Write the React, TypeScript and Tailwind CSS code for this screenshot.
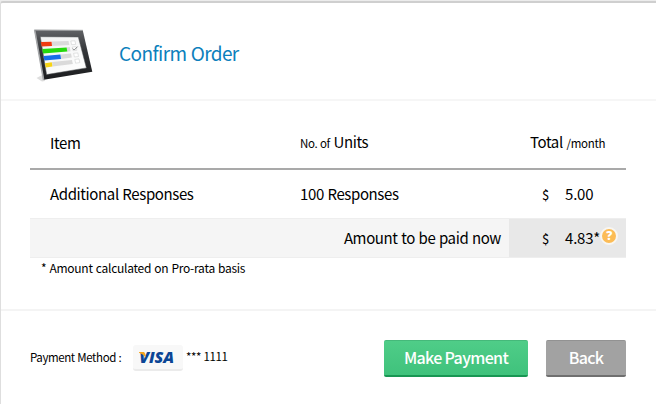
import type { ReactNode } from 'react';

const FrameIcon = () => (
  <svg width="62" height="56" viewBox="0 0 62 56" fill="none">
    <defs>
      <linearGradient id="frame" x1="0" y1="0" x2="0" y2="1">
        <stop offset="0" stopColor="#606265" />
        <stop offset="0.4" stopColor="#35373a" />
        <stop offset="1" stopColor="#1b1c1e" />
      </linearGradient>
      <linearGradient id="screen" x1="0" y1="0" x2="1" y2="1">
        <stop offset="0" stopColor="#f1f2f2" />
        <stop offset="1" stopColor="#ffffff" />
      </linearGradient>
    </defs>
    <path d="M3.5 50 L9 53.5 L12 53 L11 46 Z" fill="#dedede" />
    <path d="M1.4 2.2 L49.8 2.6 L59.3 43.7 L10.8 51.8 Z" fill="url(#frame)" />
    <path d="M0.9 2.1 L9.8 52.2 L11.4 51.8 L2.6 2.8 Z" fill="#a5a7a9" />
    <path d="M1.2 1.9 L49.9 2.3" stroke="#8d8f91" strokeWidth="0.7" />
    <path d="M7.3 8.7 L45.3 9 L53.4 39.9 L13.6 46.6 Z" fill="url(#screen)" stroke="#55585b" strokeWidth="0.5" />
    <path d="M19 13.4 L35.5 13 L36.3 17.1 L19 18 Z" fill="#dadada" />
    <path d="M7.9 14.1 L18.6 13.8 L19 18 L8.6 18.5 Z" fill="#f03a10" />
    <path d="M33.5 19.4 L36.8 19 L37.5 23.2 L34.2 23.8 Z" fill="#dadada" />
    <path d="M9.2 21 L33.6 19.5 L34.3 23.6 L10 25.4 Z" fill="#25d80c" />
    <path d="M27.5 26.4 L38 25.4 L38.8 29.4 L28 30.9 Z" fill="#dadada" />
    <path d="M10.5 28 L27.4 26.4 L28 30.9 L11.4 32.6 Z" fill="#176de8" />
    <path d="M19 34 L39 31.9 L39.8 36 L19.5 38.6 Z" fill="#dadada" />
    <path d="M12 35.2 L18.8 34.3 L19.4 38.6 L12.8 39.6 Z" fill="#f7d313" />
    <path d="M37.8 13 L42 12.8 L42.7 16.4 L38.6 16.7 Z M39.2 19 L43.2 18.7 L43.9 22.3 L40 22.7 Z M40.6 25.3 L44.8 24.9 L45.5 28.5 L41.4 29 Z M41.8 31.4 L46 30.9 L46.8 34.6 L42.6 35.2 Z" fill="#fff" stroke="#cfd0d0" strokeWidth="0.6" />
    <path d="M39.8 20.6 L41.2 22 L44.6 18.6" stroke="#77797b" strokeWidth="0.9" />
  </svg>
);

const VisaCard = () => (
  <div className="relative flex h-[26px] w-[50px] items-center justify-center rounded-[3px] border-b-2 border-[#ebebeb] bg-[#f8f8f8]">
    <span className="pt-px pr-[3px] font-['Open_Sans',sans-serif] text-[16px] leading-none font-extrabold tracking-[-0.1px] text-[#0b4595] italic">
      VISA
    </span>
    <svg className="absolute top-[7px] left-[6px]" width="9" height="8" viewBox="0 0 9 8">
      <path d="M0 0 H4.5 Q5.8 0.2 6.1 1.8 L6.9 5.8 Q4.6 2.2 0 0.8 Z" fill="#f6a51c" />
    </svg>
  </div>
);

const HelpBadge = () => (
  <span className="flex size-[18px] items-center justify-center rounded-full border-2 border-[#f8f6f2] bg-[#fcbc56] font-['Open_Sans',sans-serif] text-[12px] leading-none font-extrabold text-white">
    ?
  </span>
);

interface PriceProps {
  amount: string;
  children?: ReactNode;
}

const Price = ({ amount, children }: PriceProps) => (
  <div className="flex items-center">
    <span className="w-[23px] pt-px pl-px text-[13px]">$</span>
    <span className="pl-px tracking-[-0.2px]">{amount}</span>
    {children}
  </div>
);

export default function App() {
  return (
    <div className="flex h-[404px] w-[656px] flex-col bg-[#ececec] pt-px font-['Noto_Sans_CJK_SC',sans-serif] text-black">
      <div className="flex flex-1 flex-col rounded-tl-[3px] border-t-2 border-l border-t-[#cfcfcf] border-l-[#dedede] bg-white">
        <header className="flex h-[98px] items-center border-b-2 border-[#f6f6f6] pt-1 pl-[32px]">
          <div className="pt-1.5">
            <FrameIcon />
          </div>
          <h1 className="ml-6 text-[19px] leading-6 tracking-[-0.6px] text-[#0c80bc] [word-spacing:0.6px]">
            Confirm Order
          </h1>
        </header>

        <main className="h-[210px] border-b-2 border-[#f4f4f4] pr-[30px] pl-[29px] text-[15px] leading-5 tracking-[-0.38px] [word-spacing:0.6px]">
          <div className="flex h-[69px] items-center border-b-2 border-[#a9a9a9] pt-[15px] pl-5">
            <div className="w-[250px] pt-0.5">Item</div>
            <div className="w-[230px]">
              <span className="text-[11.5px]">No. of</span> Units
            </div>
            <div>
              Total <span className="text-[11.5px] tracking-[-0.25px]">/month</span>
            </div>
          </div>
          <div className="flex h-12 items-center pl-5">
            <div className="w-[250px]">Additional Responses</div>
            <div className="w-[241px]">100 Responses</div>
            <Price amount="5.00" />
          </div>
          <div className="flex h-10 items-stretch border-y border-[#eeeeee] bg-[#f5f5f5]">
            <div className="flex w-[479px] items-center justify-end pr-2">Amount to be paid now</div>
            <div className="flex flex-1 items-center bg-[#e8e8e8] pl-8">
              <Price amount="4.83*">
                <span className="pb-1">
                  <HelpBadge />
                </span>
              </Price>
            </div>
          </div>
          <p className="pl-[11px] text-[12px] tracking-[-0.25px]">* Amount calculated on Pro-rata basis</p>
        </main>

        <footer className="flex h-[93px] items-center pt-px pr-[30px] pl-[29px] text-[11.5px] tracking-[-0.4px] [word-spacing:0.4px]">
          <span className="w-[103px] pb-px">Payment Method :</span>
          <div className="pb-px">
            <VisaCard />
          </div>
          <span className="ml-[3px] pb-[3px]">*** 1111</span>
          <button className="ml-auto h-[37px] w-[144px] rounded-[2px] border-t border-b-2 border-t-[#45b97a] border-b-[#189653] bg-linear-to-b from-[#4fcd88] to-[#3fc27c] pb-0.5 text-[16px] leading-none font-medium tracking-[-0.65px] text-white">
            Make Payment
          </button>
          <button className="ml-[18px] h-[37px] w-[80px] rounded-[2px] border-t border-b-2 border-t-[#929292] border-b-[#6f6f6f] bg-[#a2a2a2] pb-0.5 text-[16px] leading-none font-medium tracking-[-0.65px] text-white">
            Back
          </button>
        </footer>
      </div>
    </div>
  );
}
